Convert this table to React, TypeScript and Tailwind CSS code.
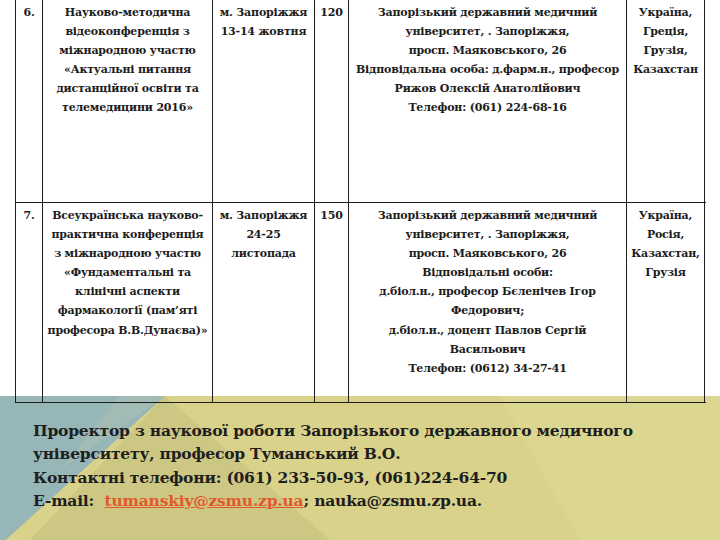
import React from "react";

type Row = {
  n: string;
  name: string[];
  place: string[];
  count: string;
  org: string[];
  countries: string[];
  h: string;
};

const rows: Row[] = [
  {
    n: "6.",
    name: [
      "Науково-методична",
      "відеоконференція з",
      "міжнародною участю",
      "«Актуальні питання",
      "дистанційної освіти та",
      "телемедицини 2016»",
    ],
    place: ["м. Запоріжжя", "13-14 жовтня"],
    count: "120",
    org: [
      "Запорізький державний медичний",
      "університет, . Запоріжжя,",
      "просп. Маяковського, 26",
      "Відповідальна особа: д.фарм.н., професор",
      "Рижов Олексій Анатолійович",
      "Телефон: (061) 224-68-16",
    ],
    countries: ["Україна,", "Греція,", "Грузія,", "Казахстан"],
    h: "h-[203px]",
  },
  {
    n: "7.",
    name: [
      "Всеукраїнська науково-",
      "практична конференція",
      "з міжнародною участю",
      "«Фундаментальні та",
      "клінічні аспекти",
      "фармакології (пам’яті",
      "професора В.В.Дунаєва)»",
    ],
    place: ["м. Запоріжжя", "24-25", "листопада"],
    count: "150",
    org: [
      "Запорізький державний медичний",
      "університет, . Запоріжжя,",
      "просп. Маяковського, 26",
      "Відповідальні особи:",
      "д.біол.н., професор Бєленічев Ігор",
      "Федорович;",
      "д.біол.н., доцент Павлов Сергій",
      "Васильович",
      "Телефон: (0612) 34-27-41",
    ],
    countries: ["Україна,", "Росія,", "Казахстан,", "Грузія"],
    h: "h-[200px]",
  },
];

function Lines({ items }: { items: string[] }) {
  return (
    <>
      {items.map((t, i) => (
        <div key={i} className="whitespace-nowrap">
          {t}
        </div>
      ))}
    </>
  );
}

export default function App() {
  return (
    <div
      className="relative w-[720px] h-[540px] overflow-hidden bg-white"
      style={{ fontFamily: '"DejaVu Serif", serif' }}
    >
      <svg
        className="absolute left-0 top-0"
        width="720"
        height="540"
        viewBox="0 0 720 540"
      >
        <rect x="0" y="396" width="720" height="144" fill="#d8d28a" />
        <polygon points="500,396 720,396 720,540 580,540" fill="#dcd790" />
        <polygon points="165,396 330,540 30,540" fill="#cdc784" />
        <polygon points="0,396 165,396 0,545" fill="#96b6b8" />
        <polygon points="120,396 165,396 60,470" fill="#a3bbb5" />
      </svg>

      <div className="relative">
        {rows.map((r, i) => (
          <div
            key={i}
            className={`ml-[15px] grid grid-cols-[27px_170px_102px_34px_278px_79px] ${r.h} border-b border-[#1e1e1e] w-[691px] text-[11px] leading-[19.1px] font-bold text-[#1c1c1c] tracking-[-0.2px]`}
          >
            <div className="border-l border-[#1e1e1e] text-center pt-[3px]">{r.n}</div>
            <div className="border-l border-[#1e1e1e] text-center pt-[3px]">
              <Lines items={r.name} />
            </div>
            <div className="border-l border-[#1e1e1e] text-center pt-[3px]">
              <Lines items={r.place} />
            </div>
            <div className="border-l border-[#1e1e1e] text-center pt-[3px]">{r.count}</div>
            <div className="border-l border-[#1e1e1e] text-center pt-[3px]">
              <Lines items={r.org} />
            </div>
            <div className="border-l border-r border-[#1e1e1e] text-center pt-[3px]">
              <Lines items={r.countries} />
            </div>
          </div>
        ))}

        <div className="ml-[33px] mt-[16px] text-[15.5px] leading-[23.3px] font-bold text-[#1e1e1e] tracking-[-0.2px]">
          <div className="whitespace-nowrap">
            Проректор з наукової роботи Запорізького державного медичного
          </div>
          <div className="whitespace-nowrap">університету, професор Туманський В.О.</div>
          <div className="whitespace-nowrap">Контактні телефони: (061) 233-50-93, (061)224-64-70</div>
          <div className="whitespace-nowrap">
            E-mail:&nbsp;&nbsp;
            <span className="text-[#e2592b] underline">tumanskiy@zsmu.zp.ua</span>; nauka@zsmu.zp.ua.
          </div>
        </div>
      </div>
    </div>
  );
}
